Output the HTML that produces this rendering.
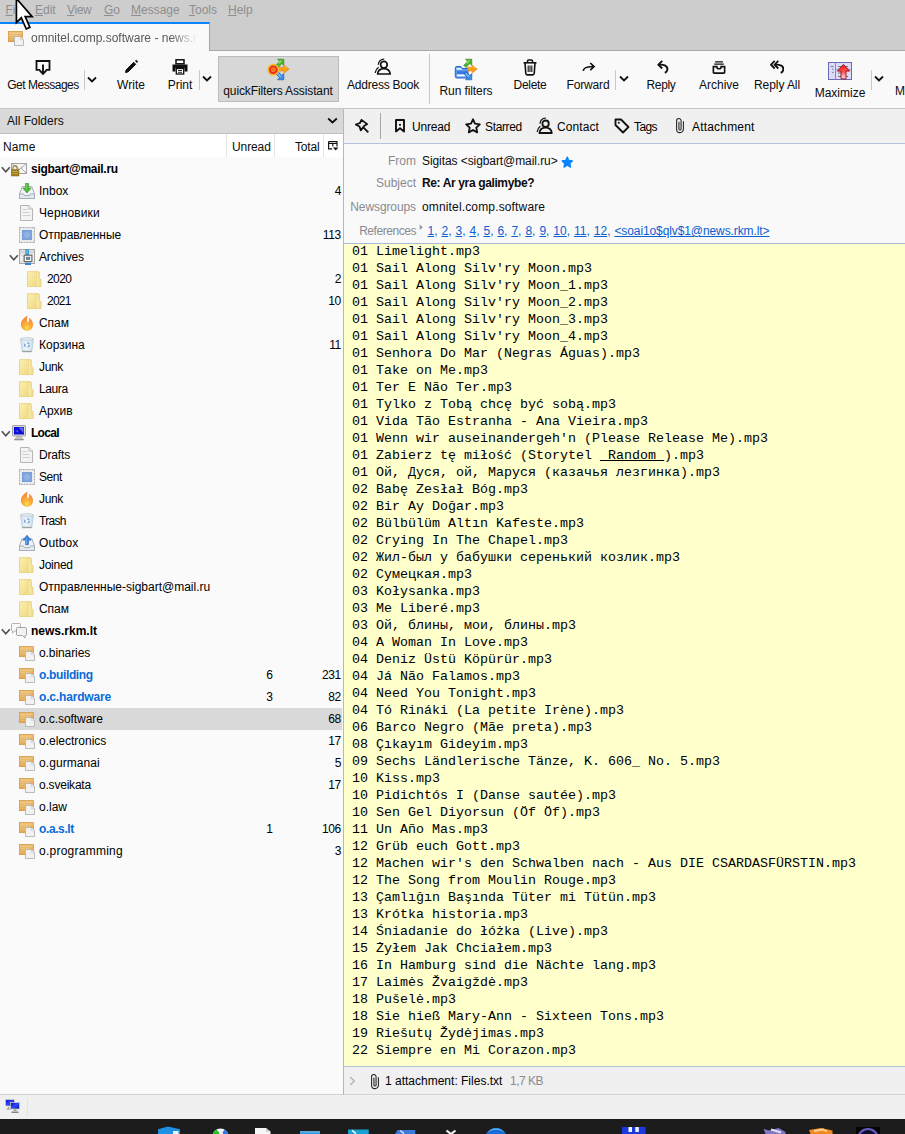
<!DOCTYPE html>
<html><head><meta charset="utf-8"><title>omnitel.comp.software - news.rkm.lt</title>
<style>
*{box-sizing:border-box}
html,body{margin:0;padding:0}
body{width:905px;height:1134px;position:relative;overflow:hidden;background:#f9f9fa;font-family:"Liberation Sans",sans-serif;font-size:12px;color:#0c0c0d}
.abs{position:absolute}
#menubar{left:0;top:0;width:905px;height:22px;background:#cdcdcd;color:#8e8e8e}
#menubar span{position:absolute;top:3px;font-size:12px}
#menubar u{text-decoration-thickness:1px;text-underline-offset:1px}
#tabbar{left:0;top:22px;width:905px;height:29px;background:#cdcdcd;border-bottom:1px solid #a9a9a9}
#tab{left:0;top:22px;width:210px;height:29px;background:#f9f9fa;border-top:2px solid #0a84ff;border-right:1px solid #a6a6a6}
#tabtitle{left:31px;top:30.500px;line-height:14px;width:166px;white-space:nowrap;overflow:hidden;color:#58585c;-webkit-mask-image:linear-gradient(90deg,#000 140px,transparent 166px);mask-image:linear-gradient(90deg,#000 140px,transparent 166px)}
#toolbar{left:0;top:51px;width:905px;height:58px;background:#f9f9fa;border-bottom:1px solid #c6c6c6}
.tb{position:absolute;white-space:nowrap;text-align:center;transform:translateX(-50%);line-height:14px}
.tbi{position:absolute;transform:translateX(-50%)}
.sep{position:absolute;width:1px;background:#c8c8c8}
.chev{position:absolute}
#qfbtn{left:218px;top:56px;width:121px;height:46px;background:#d7d7d8;border:1px solid #bcbcbc}
#fhead{left:0;top:109px;width:343px;height:25px;background:#d9d9d9;border-bottom:1px solid #c0c0c0}
#fcols{left:0;top:134px;width:343px;height:23px;background:#fff}
#ftree{left:0;top:157px;width:343px;height:938px;background:#fafafa;border-bottom:1px solid #d2d2d2}
#split{left:343px;top:109px;width:1px;height:986px;background:#a9b9d0}
.row{position:absolute;left:0;width:342px;height:22px;line-height:22px;color:#000}
.row.sel{background:#d9d9d9}
.row span{position:absolute;top:0}
.row .ic{top:3px;height:16px;line-height:0}
.row .tw{top:8px;line-height:0}
.nm{white-space:nowrap}
.nm.b{font-weight:bold}
.nm.u{font-weight:bold;color:#0a6bd8}
.un{right:69.500px;text-align:right;letter-spacing:-.3px}
.tot{right:1px;text-align:right;letter-spacing:-.3px}
#qf{left:344px;top:109px;width:561px;height:35px;background:linear-gradient(#f0f0f0 80%,#f4f4f4);border-bottom:1px solid #b3c3da}
#qf span{position:absolute;top:11px;line-height:14px;color:#000}
#qf svg{position:absolute}
#hdr{left:344px;top:144px;width:561px;height:99px;background:#f9f9fa}
.hl{position:absolute;left:0;width:72px;text-align:right;color:#8a8a8e;line-height:14px;white-space:nowrap}
.hv{position:absolute;left:78px;line-height:14px;white-space:nowrap}
#msg{left:344px;top:243px;width:561px;height:823px;background:#ffffcc;border-top:1px solid #a9bbd4}
#msg pre{margin:0;position:absolute;left:8px;top:-1px;font-family:"Liberation Mono",monospace;font-size:13.333px;line-height:17px;color:#000}
#att{left:344px;top:1066px;width:561px;height:29px;background:#f0f0f0;border-top:1px solid #b3c6dc;border-bottom:1px solid #d2d2d2}
#status{left:0;top:1095px;width:905px;height:24px;background:#f0f0f0}
#taskbar{left:0;top:1119px;width:905px;height:15px;background:#1c1c1c}
a{color:#0a60d0;text-decoration:underline}
</style></head><body>

<div id="menubar" class="abs">
<span style="left:5.500px"><u>F</u>ile</span><span style="left:35px"><u>E</u>dit</span><span style="left:67px;letter-spacing:-.4px"><u>V</u>iew</span><span style="left:104px"><u>G</u>o</span><span style="left:131px"><u>M</u>essage</span><span style="left:189px"><u>T</u>ools</span><span style="left:228px"><u>H</u>elp</span>
</div>
<div id="tabbar" class="abs"></div>
<div id="tab" class="abs"></div>
<div class="abs" style="left:8px;top:30px;line-height:0"><svg width="16" height="16" viewBox="0 0 16 16"><defs><linearGradient id="gg0" x1="0" y1="0" x2="0" y2="1"><stop offset="0" stop-color="#efc47e"/><stop offset="1" stop-color="#e0a248"/></linearGradient></defs><rect x=".4" y="1.400" width="14" height="10.200" fill="url(#gg0)" stroke="#d89a44" stroke-width=".8"/><path d="M1.500 3.500h12M1.500 5.500h12M1.500 7.500h5M1.500 9.500h5" stroke="#f8e4b8" stroke-width=".7" stroke-dasharray="1 1" opacity=".75"/><path d="M6.500 6.500h6l3 3v6h-9z" fill="#f2f2f2" stroke="#b4b4b4" stroke-width=".9"/><path d="M12.300 6.300l3.300 3.300h-3.300z" fill="#e8e8e8" stroke="#c0c0c0" stroke-width=".5"/><circle cx="13" cy="5.800" r="1.500" fill="#f4a660"/></svg></div>
<div id="tabtitle" class="abs">omnitel.comp.software - news.rkm.lt</div>

<div id="toolbar" class="abs"></div>
<div id="qfbtn" class="abs"></div>

<!-- toolbar labels -->
<div class="tb" style="left:43px;top:78px;letter-spacing:-0.48px">Get Messages</div>
<div class="tb" style="left:131px;top:78px">Write</div>
<div class="tb" style="left:180px;top:78px">Print</div>
<div class="tb" style="left:278px;top:84px;letter-spacing:-0.12px">quickFilters Assistant</div>
<div class="tb" style="left:383px;top:78px;letter-spacing:-0.23px">Address Book</div>
<div class="tb" style="left:466px;top:84px;letter-spacing:-0.09px">Run filters</div>
<div class="tb" style="left:530px;top:78px;letter-spacing:-0.28px">Delete</div>
<div class="tb" style="left:588px;top:78px;letter-spacing:-0.15px">Forward</div>
<div class="tb" style="left:661px;top:78px;letter-spacing:-0.34px">Reply</div>
<div class="tb" style="left:719px;top:78px">Archive</div>
<div class="tb" style="left:777px;top:78px;letter-spacing:-0.08px">Reply All</div>
<div class="tb" style="left:840px;top:86px">Maximize</div>
<div class="abs" style="left:895px;top:84px;line-height:14px">M</div>

<!-- toolbar separators + chevrons -->
<div class="sep" style="left:84px;top:70px;height:20px"></div>
<div class="sep" style="left:199px;top:70px;height:20px"></div>
<div class="sep" style="left:429px;top:54px;height:50px"></div>
<div class="sep" style="left:615px;top:70px;height:20px"></div>
<div class="sep" style="left:871px;top:70px;height:20px"></div>
<svg class="chev" style="left:87px;top:75.500px" width="10" height="8" viewBox="0 0 10 8"><path d="M1 1.500l4 4 4-4" fill="none" stroke="#111" stroke-width="1.800"/></svg>
<svg class="chev" style="left:202px;top:75px" width="10" height="8" viewBox="0 0 10 8"><path d="M1 1.500l4 4 4-4" fill="none" stroke="#111" stroke-width="1.800"/></svg>
<svg class="chev" style="left:619px;top:75px" width="10" height="8" viewBox="0 0 10 8"><path d="M1 1.500l4 4 4-4" fill="none" stroke="#111" stroke-width="1.800"/></svg>
<svg class="chev" style="left:874px;top:75px" width="10" height="8" viewBox="0 0 10 8"><path d="M1 1.500l4 4 4-4" fill="none" stroke="#111" stroke-width="1.800"/></svg>

<!-- toolbar icons -->
<!-- get messages -->
<svg class="tbi" style="left:43px;top:60px" width="16" height="16" viewBox="0 0 16 16"><path d="M5.200 9.800h-3.700v-8.800h13v8.800h-3.700" fill="none" stroke="#111" stroke-width="1.800"/><path d="M8 4.500v9M4.600 10.300l3.400 3.500 3.400-3.500" fill="none" stroke="#111" stroke-width="1.900"/></svg>
<!-- write -->
<svg class="tbi" style="left:131px;top:59px" width="16" height="16" viewBox="0 0 16 16"><path d="M2.500 13.500l.6-2.600 7.600-7.600 2 2-7.600 7.600z" fill="#111" stroke="#111" stroke-width="1"/><path d="M12 2l1.200-1.200 2 2-1.200 1.200z" fill="#111"/></svg>
<!-- print -->
<svg class="tbi" style="left:180px;top:59px" width="16" height="16" viewBox="0 0 16 16"><rect x="4" y=".8" width="8" height="4" fill="#fff" stroke="#111" stroke-width="1.500"/><path d="M.5 5.500h15v7h-3v-3.500h-9v3.500h-3z" fill="#111"/><rect x="4.300" y="9.500" width="7.400" height="5.500" fill="#fff" stroke="#111" stroke-width="1.300"/><path d="M6 11.500h4M6 13.300h4" stroke="#111" stroke-width=".9"/></svg>
<!-- quickfilters -->
<svg class="abs" style="left:266px;top:58px" width="24" height="24" viewBox="0 0 24 24"><path d="M11.500 1.200h6.300v6.300l-2-2-3.800 4-2.200-2.200 3.800-4z" fill="#4caf2e" stroke="#2c8418" stroke-width=".6"/><path d="M12 3.200l3.300-1.200 1 .9-3.600 3.800z" fill="#9be06a" opacity=".7"/><path d="M13.500 9.200h4.700v-2l5 3.900-5 3.900v-2h-4.700z" fill="#f8a018" stroke="#e07a08" stroke-width=".5"/><path d="M14 10h5v-1.500l2 1.500z" fill="#ffd84a" opacity=".8"/><path d="M11.500 21.800h6.300v-6.300l-2 2-3.800-4-2.200 2.200 3.800 4z" fill="#3a8ee6" stroke="#1c4eb0" stroke-width=".6"/><path d="M12.200 15l3.300 3.400-1.300 1-3-3.200z" fill="#7ccaf8" opacity=".8"/><circle cx="7.300" cy="11.700" r="5.700" fill="#f4a81c"/><circle cx="7.300" cy="11.700" r="5.300" fill="none" stroke="#f6c828" stroke-width="1.600" stroke-dasharray="1.400 1.370"/><circle cx="7.300" cy="11.700" r="4.300" fill="#ee2a1a"/><circle cx="7.300" cy="11.700" r="2" fill="#f04a1c" stroke="#f8a828" stroke-width=".9"/><ellipse cx="7.300" cy="11.700" rx=".6" ry="1" fill="#f8a828"/></svg>
<!-- address book -->
<svg class="abs" style="left:374px;top:58px" width="18" height="17" viewBox="0 -1 18 17"><circle cx="9.900" cy="5.700" r="3.300" fill="none" stroke="#111" stroke-width="1.700"/><path d="M3.600 15c.4-3.400 2.900-5.300 6.300-5.300s5.900 1.900 6.300 5.300z" fill="none" stroke="#111" stroke-width="1.700" stroke-linejoin="round"/><path d="M10.200 .1a5.600 5.600 0 0 0-5.900 5.700M4.600 8.300a8 8 0 0 0-3.400 5.500" fill="none" stroke="#111" stroke-width="1.300"/></svg>
<!-- run filters -->
<svg class="abs" style="left:454px;top:58px" width="24" height="24" viewBox="0 0 24 24"><path d="M1.300 10a1.500 1.500 0 0 1 1.500-1.500h4l1.700 2h5.500v9.500h-11.200a1.500 1.500 0 0 1-1.500-1.500z" fill="#5a9cf0" stroke="#2a62d0" stroke-width="1"/><path d="M2.500 10h4.200l1.500 1.800h-5.700z" fill="#e4f0ff"/><path d="M3 13.200h10v3h-10z" fill="#3a78e0"/><path d="M3 16.400h8.500v2h-8.500z" fill="#f4f8ff"/><path d="M11.500 1.200h6.300v6.300l-2-2-3.800 4-2.200-2.200 3.800-4z" fill="#4caf2e" stroke="#2c8418" stroke-width=".6"/><path d="M12 3.200l3.300-1.200 1 .9-3.600 3.800z" fill="#9be06a" opacity=".7"/><path d="M13.500 9.200h4.700v-2l5 3.900-5 3.900v-2h-4.700z" fill="#f8a018" stroke="#e07a08" stroke-width=".5"/><path d="M14 10h5v-1.500l2 1.500z" fill="#ffd84a" opacity=".8"/><path d="M11.500 21.800h6.300v-6.300l-2 2-3.800-4-2.200 2.200 3.800 4z" fill="#3a8ee6" stroke="#1c4eb0" stroke-width=".6"/><path d="M12.200 15l3.300 3.400-1.300 1-3-3.200z" fill="#7ccaf8" opacity=".8"/></svg>
<!-- delete -->
<svg class="tbi" style="left:530px;top:59px" width="16" height="17" viewBox="0 0 16 17"><path d="M1.500 3.800h13" stroke="#111" stroke-width="1.600"/><path d="M5.500 3.500v-1.500a1 1 0 0 1 1-1h3a1 1 0 0 1 1 1v1.500" fill="none" stroke="#111" stroke-width="1.500"/><path d="M3 4l.8 10.500a1.500 1.500 0 0 0 1.500 1.400h5.400a1.500 1.500 0 0 0 1.500-1.400l.8-10.500" fill="none" stroke="#111" stroke-width="1.600"/><path d="M6.200 6.500v6.500M8 6.500v6.500M9.800 6.500v6.500" stroke="#111" stroke-width="1.100"/></svg>
<!-- forward -->
<svg class="tbi" style="left:589px;top:62px" width="14" height="10" viewBox="0 0 14 10"><path d="M1.200 8.800c.5-3 3.500-4.300 10-4" fill="none" stroke="#111" stroke-width="1.700"/><path d="M8.300 1l3.700 3.600-3.700 3.500" fill="none" stroke="#111" stroke-width="1.700"/></svg>
<!-- reply -->
<svg class="abs" style="left:657px;top:59.500px" width="12" height="14" viewBox="0 0 12 14"><path d="M5.200 .9l-3.800 3.800 3.800 3.800" fill="none" stroke="#111" stroke-width="1.900"/><path d="M1.800 4.700c5.400-.4 9 1.400 8.600 4.900-.2 1.400-1 2.400-2.500 3.300" fill="none" stroke="#111" stroke-width="1.900"/></svg>
<!-- archive -->
<svg class="tbi" style="left:719px;top:61px" width="14" height="13" viewBox="0 0 16 15"><path d="M3.500 1h9M2.500 3.600h11" stroke="#111" stroke-width="1.500"/><path d="M1.500 6.500h4c0 1.500 1 2.500 2.500 2.500s2.500-1 2.500-2.500h4v6.500a1 1 0 0 1-1 1h-11a1 1 0 0 1-1-1z" fill="none" stroke="#111" stroke-width="1.900"/></svg>
<!-- reply all -->
<svg class="abs" style="left:769.500px;top:59.500px" width="14.500" height="14" viewBox="0 0 14.500 14"><path d="M4.700 .9l-3.700 3.800 3.700 3.800M8.300 .9l-3.700 3.800 3.700 3.800" fill="none" stroke="#111" stroke-width="1.800"/><path d="M5 4.700c5.200-.4 8.700 1.400 8.300 4.900-.2 1.400-1 2.400-2.500 3.300" fill="none" stroke="#111" stroke-width="1.900"/></svg>
<!-- maximize -->
<svg class="abs" style="left:828px;top:62px" width="24" height="18" viewBox="0 0 24 18"><defs><linearGradient id="mx" x1="0" y1="0" x2="0" y2="1"><stop offset="0" stop-color="#f81818"/><stop offset=".55" stop-color="#fb5a5a"/><stop offset="1" stop-color="#fff0f0"/></linearGradient></defs><rect x=".5" y=".5" width="23" height="17" fill="#dcdcfa" stroke="#6a6ab6"/><path d="M7.500 .5v17" stroke="#8484c8" stroke-width="1"/><path d="M8 7.200h15.500" stroke="#7a8ee0" stroke-width=".7"/><path d="M2.800 4.500h2.700M4 7.200h1.500M4 10.400h1.500M10 4.500h10M10 11h3M10 14.500h10" stroke="#5a5a6a" stroke-width=".8"/><path d="M15.400 2.500l6.300 6.600h-3.700v7.700h-5v-7.700h-3.600z" fill="url(#mx)" stroke="#a40606" stroke-width=".9" stroke-linejoin="round"/></svg>

<!-- folder pane -->
<div id="fhead" class="abs"><span class="abs" style="left:7px;top:5px;line-height:14px">All Folders</span><svg class="abs" style="left:327px;top:8px" width="11" height="8" viewBox="0 0 11 8"><path d="M1.200 1.500l4.300 4 4.300-4" fill="none" stroke="#111" stroke-width="1.800"/></svg></div>
<div id="fcols" class="abs">
<span class="abs" style="left:3px;top:6px;line-height:14px;letter-spacing:.1px">Name</span>
<span class="abs" style="left:232px;top:6px;line-height:14px;letter-spacing:-.1px">Unread</span>
<span class="abs" style="left:295px;top:6px;line-height:14px;letter-spacing:-.2px">Total</span>
<div class="sep" style="left:226px;top:0;height:23px;background:#e4e4e4"></div>
<div class="sep" style="left:274px;top:0;height:23px;background:#e4e4e4"></div>
<div class="sep" style="left:323px;top:0;height:23px;background:#e4e4e4"></div>
<svg class="abs" style="left:328px;top:7px" width="11" height="10" viewBox="0 0 11 10"><path d="M.6 .6h8.400v5M.6 .6v7.300h3.600M.6 2.500h8.400M4.800 2.500v3" fill="none" stroke="#111" stroke-width="1.150"/><path d="M5 6.400h5.400l-2.700 3.200z" fill="#111"/></svg>
</div>
<div id="ftree" class="abs"></div>
<div class="row" style="top:158px">
<span class="tw" style="left:1px"><svg width="10" height="8" viewBox="0 0 10 8"><path d="M.8 1.200l4 4.500 4-4.500" fill="none" stroke="#505050" stroke-width="1.600"/></svg></span>
<span class="ic" style="left:11px"><svg width="16" height="16" viewBox="0 0 16 16"><path d="M.5 2.500h15v10h-15z" fill="#f4f4f4" stroke="#a2a2a2"/><path d="M.5 2.500l7.500 6 7.500-6M15.500 12.500l-5.500-5.500" fill="none" stroke="#a8a8a8"/><path d="M2 8.500v-1.700a2.100 2.100 0 0 1 4.200 0v1.700" fill="none" stroke="#a08a3a" stroke-width="1.300"/><rect x=".3" y="8.500" width="7.700" height="6.500" fill="#9c7e1c" stroke="#8a6c14" stroke-width=".5"/><path d="M1 10.500h6.300M1 12.700h6.300" stroke="#c8aa50" stroke-width=".9"/></svg></span>
<span class="nm b" style="left:31px;letter-spacing:-0.28px">sigbart@mail.ru</span>
</div>
<div class="row" style="top:180px">
<span class="ic" style="left:19px"><svg width="16" height="16" viewBox="0 0 16 16"><path d="M3.200 3.500h9.600l2.700 7.500v4.500h-15v-4.500z" fill="#f0f2f6" stroke="#a9adb6"/><path d="M.5 11h4l1 1.600h5l1-1.600h4v4.500h-15z" fill="#e3e9f1" stroke="#a9adb6"/><path d="M6.500 .2h3v4.800h2.700l-4.200 5-4.200-5h2.700z" fill="#4cbc38" stroke="#2f9422" stroke-width=".6"/><path d="M7.300 1v5" stroke="#8ade74" stroke-width=".9"/></svg></span>
<span class="nm" style="left:39px">Inbox</span>
<span class="tot">4</span>
</div>
<div class="row" style="top:202px">
<span class="ic" style="left:19px"><svg width="16" height="16" viewBox="0 0 16 16"><path d="M1.500 .5h8.500l3.500 3.500v11.500h-12z" fill="#f3f3f3" stroke="#b5b5b5"/><path d="M10 .5v3.500h3.500" fill="#fafafa" stroke="#b5b5b5"/><path d="M3.500 4.500h5M3.500 7.500h7M3.500 10.500h8" stroke="#d0d0d0"/></svg></span>
<span class="nm" style="left:39px;letter-spacing:0.12px">Черновики</span>
</div>
<div class="row" style="top:224px">
<span class="ic" style="left:19px"><svg width="16" height="16" viewBox="0 0 16 16"><rect x=".6" y=".6" width="14.800" height="14.800" fill="#f6f6f6" stroke="#b0b0b0" stroke-width="1.200" stroke-dasharray="2.200 .75"/><rect x="3.300" y="3.300" width="9.400" height="9.400" fill="#7ea6dc" stroke="#6a94d2" stroke-width=".8"/><circle cx="8" cy="8" r="2.300" fill="#8db1e2" stroke="#a4c2ea" stroke-width=".7"/></svg></span>
<span class="nm" style="left:39px;letter-spacing:-0.08px">Отправленные</span>
<span class="tot">113</span>
</div>
<div class="row" style="top:246px">
<span class="tw" style="left:9px"><svg width="10" height="8" viewBox="0 0 10 8"><path d="M.8 1.200l4 4.500 4-4.500" fill="none" stroke="#505050" stroke-width="1.600"/></svg></span>
<span class="ic" style="left:19px"><svg width="16" height="16" viewBox="0 0 16 16"><rect x=".5" y=".5" width="15" height="14" fill="#f0f0f0" stroke="#a6a6a6"/><path d="M1 2.200h14M1 3.800h14" stroke="#c4c4c4" stroke-width=".8"/><path d="M.8 4.500l5 5-5 5" fill="none" stroke="#c0c0c0" stroke-width=".8"/><rect x="6.300" y="0" width="3.700" height="7" fill="#3a9acc"/><path d="M8.100 .8v4" stroke="#8ad0ee" stroke-width="1"/><rect x="5.200" y="6.200" width="7.700" height="6.400" fill="#f6f6f6" stroke="#6c6c6c" stroke-width="1.200"/><rect x="7.300" y="8.200" width="3.500" height="2.300" fill="#3a9acc" stroke="#666" stroke-width=".6"/><rect x="6" y="13.600" width="6" height="2.400" fill="#3a84d0"/></svg></span>
<span class="nm" style="left:39px;letter-spacing:-0.14px">Archives</span>
</div>
<div class="row" style="top:268px">
<span class="ic" style="left:27px"><svg width="16" height="16" viewBox="0 0 16 16"><defs><linearGradient id="fg" x1="0" y1="0" x2="1" y2="1"><stop offset="0" stop-color="#fbf0b4"/><stop offset="1" stop-color="#f0d87e"/></linearGradient></defs><path d="M9.500 .7h2.300l.5.500v5.800l1.700 1.800v6.700h-4.500z" fill="#f3e19a" stroke="#e6cf7c" stroke-width=".9"/><path d="M.5 .7h9v14.800h-9z" fill="url(#fg)" stroke="#e8d27e" stroke-width=".9"/><path d="M10.200 1.500v13.500" stroke="#faf3cc" stroke-width=".8"/></svg></span>
<span class="nm" style="left:47px;letter-spacing:-0.6px">2020</span>
<span class="tot">2</span>
</div>
<div class="row" style="top:290px">
<span class="ic" style="left:27px"><svg width="16" height="16" viewBox="0 0 16 16"><defs><linearGradient id="fg" x1="0" y1="0" x2="1" y2="1"><stop offset="0" stop-color="#fbf0b4"/><stop offset="1" stop-color="#f0d87e"/></linearGradient></defs><path d="M9.500 .7h2.300l.5.500v5.800l1.700 1.800v6.700h-4.500z" fill="#f3e19a" stroke="#e6cf7c" stroke-width=".9"/><path d="M.5 .7h9v14.800h-9z" fill="url(#fg)" stroke="#e8d27e" stroke-width=".9"/><path d="M10.200 1.500v13.500" stroke="#faf3cc" stroke-width=".8"/></svg></span>
<span class="nm" style="left:47px;letter-spacing:-0.75px">2021</span>
<span class="tot">10</span>
</div>
<div class="row" style="top:312px">
<span class="ic" style="left:19px"><svg width="16" height="16" viewBox="0 0 16 16"><defs><radialGradient id="sg" cx=".5" cy=".82" r=".75"><stop offset="0" stop-color="#ffe436"/><stop offset=".3" stop-color="#fbb63c"/><stop offset=".65" stop-color="#f79a40"/><stop offset="1" stop-color="#f2872e"/></radialGradient></defs><path d="M8.700 .2c-1.200 1.300-5.700 3.300-6.700 7.800-.8 4 2 7.700 6 7.700s6.300-3.200 6-6.700c-.2-3-2-5-3.800-6.200.4 2-.4 4-1.600 4.800-.8-1.600-.6-4.600.100-7.400z" fill="url(#sg)"/></svg></span>
<span class="nm" style="left:39px;letter-spacing:-0.07px">Спам</span>
</div>
<div class="row" style="top:334px">
<span class="ic" style="left:19px"><svg width="16" height="16" viewBox="0 0 16 16"><defs><linearGradient id="tg" x1="0" x2="1"><stop offset="0" stop-color="#cfe2f0"/><stop offset=".5" stop-color="#eef5fa"/><stop offset="1" stop-color="#c6dbea"/></linearGradient></defs><path d="M1.500 2l1.700 12.500h9.600l1.700-12.500z" fill="url(#tg)" stroke="#b8cbd9" stroke-width=".8"/><ellipse cx="8" cy="2" rx="6.500" ry="1.300" fill="#e6eef5" stroke="#b3c2ce" stroke-width=".7"/><path d="M3.300 14.500h9.400" stroke="#9a9fa5" stroke-width="1.400"/><circle cx="8" cy="8" r="2.300" fill="none" stroke="#5a94d0" stroke-width="1.100" stroke-dasharray="2.800 2"/></svg></span>
<span class="nm" style="left:39px">Корзина</span>
<span class="tot">11</span>
</div>
<div class="row" style="top:356px">
<span class="ic" style="left:19px"><svg width="16" height="16" viewBox="0 0 16 16"><defs><linearGradient id="fg" x1="0" y1="0" x2="1" y2="1"><stop offset="0" stop-color="#fbf0b4"/><stop offset="1" stop-color="#f0d87e"/></linearGradient></defs><path d="M9.500 .7h2.300l.5.500v5.800l1.700 1.800v6.700h-4.500z" fill="#f3e19a" stroke="#e6cf7c" stroke-width=".9"/><path d="M.5 .7h9v14.800h-9z" fill="url(#fg)" stroke="#e8d27e" stroke-width=".9"/><path d="M10.200 1.500v13.500" stroke="#faf3cc" stroke-width=".8"/></svg></span>
<span class="nm" style="left:39px;letter-spacing:-0.34px">Junk</span>
</div>
<div class="row" style="top:378px">
<span class="ic" style="left:19px"><svg width="16" height="16" viewBox="0 0 16 16"><defs><linearGradient id="fg" x1="0" y1="0" x2="1" y2="1"><stop offset="0" stop-color="#fbf0b4"/><stop offset="1" stop-color="#f0d87e"/></linearGradient></defs><path d="M9.500 .7h2.300l.5.500v5.800l1.700 1.800v6.700h-4.500z" fill="#f3e19a" stroke="#e6cf7c" stroke-width=".9"/><path d="M.5 .7h9v14.800h-9z" fill="url(#fg)" stroke="#e8d27e" stroke-width=".9"/><path d="M10.200 1.500v13.500" stroke="#faf3cc" stroke-width=".8"/></svg></span>
<span class="nm" style="left:39px;letter-spacing:-0.4px">Laura</span>
</div>
<div class="row" style="top:400px">
<span class="ic" style="left:19px"><svg width="16" height="16" viewBox="0 0 16 16"><defs><linearGradient id="fg" x1="0" y1="0" x2="1" y2="1"><stop offset="0" stop-color="#fbf0b4"/><stop offset="1" stop-color="#f0d87e"/></linearGradient></defs><path d="M9.500 .7h2.300l.5.500v5.800l1.700 1.800v6.700h-4.500z" fill="#f3e19a" stroke="#e6cf7c" stroke-width=".9"/><path d="M.5 .7h9v14.800h-9z" fill="url(#fg)" stroke="#e8d27e" stroke-width=".9"/><path d="M10.200 1.500v13.500" stroke="#faf3cc" stroke-width=".8"/></svg></span>
<span class="nm" style="left:39px">Архив</span>
</div>
<div class="row" style="top:422px">
<span class="tw" style="left:1px"><svg width="10" height="8" viewBox="0 0 10 8"><path d="M.8 1.200l4 4.500 4-4.500" fill="none" stroke="#505050" stroke-width="1.600"/></svg></span>
<span class="ic" style="left:11px"><svg width="16" height="16" viewBox="0 0 16 16"><rect x="1.500" y=".5" width="13" height="10.500" rx=".6" fill="#dcdad2" stroke="#a4a4a4"/><rect x="3" y="2" width="10" height="7.500" fill="#0c0cdc"/><path d="M7.500 2.500h5v5.500z" fill="#6a7af0" opacity=".85"/><path d="M4 6.500l2.500-2 1.500 3z" fill="#4a5ae8" opacity=".8"/><path d="M6.200 11.500h3.600l2.700 3h-9z" fill="#c4c4c4" stroke="#9c9c9c" stroke-width=".6"/><path d="M3.500 14.700h9" stroke="#8c8c8c" stroke-width="1.200"/></svg></span>
<span class="nm b" style="left:31px;letter-spacing:-0.71px">Local</span>
</div>
<div class="row" style="top:444px">
<span class="ic" style="left:19px"><svg width="16" height="16" viewBox="0 0 16 16"><path d="M1.500 .5h8.500l3.500 3.500v11.500h-12z" fill="#f3f3f3" stroke="#b5b5b5"/><path d="M10 .5v3.500h3.500" fill="#fafafa" stroke="#b5b5b5"/><path d="M3.500 4.500h5M3.500 7.500h7M3.500 10.500h8" stroke="#d0d0d0"/></svg></span>
<span class="nm" style="left:39px;letter-spacing:-0.17px">Drafts</span>
</div>
<div class="row" style="top:466px">
<span class="ic" style="left:19px"><svg width="16" height="16" viewBox="0 0 16 16"><rect x=".6" y=".6" width="14.800" height="14.800" fill="#f6f6f6" stroke="#b0b0b0" stroke-width="1.200" stroke-dasharray="2.200 .75"/><rect x="3.300" y="3.300" width="9.400" height="9.400" fill="#7ea6dc" stroke="#6a94d2" stroke-width=".8"/><circle cx="8" cy="8" r="2.300" fill="#8db1e2" stroke="#a4c2ea" stroke-width=".7"/></svg></span>
<span class="nm" style="left:39px;letter-spacing:-0.45px">Sent</span>
</div>
<div class="row" style="top:488px">
<span class="ic" style="left:19px"><svg width="16" height="16" viewBox="0 0 16 16"><defs><radialGradient id="sg" cx=".5" cy=".82" r=".75"><stop offset="0" stop-color="#ffe436"/><stop offset=".3" stop-color="#fbb63c"/><stop offset=".65" stop-color="#f79a40"/><stop offset="1" stop-color="#f2872e"/></radialGradient></defs><path d="M8.700 .2c-1.200 1.300-5.700 3.300-6.700 7.800-.8 4 2 7.700 6 7.700s6.300-3.200 6-6.700c-.2-3-2-5-3.800-6.200.4 2-.4 4-1.600 4.800-.8-1.600-.6-4.600.100-7.400z" fill="url(#sg)"/></svg></span>
<span class="nm" style="left:39px;letter-spacing:-0.34px">Junk</span>
</div>
<div class="row" style="top:510px">
<span class="ic" style="left:19px"><svg width="16" height="16" viewBox="0 0 16 16"><defs><linearGradient id="tg" x1="0" x2="1"><stop offset="0" stop-color="#cfe2f0"/><stop offset=".5" stop-color="#eef5fa"/><stop offset="1" stop-color="#c6dbea"/></linearGradient></defs><path d="M1.500 2l1.700 12.500h9.600l1.700-12.500z" fill="url(#tg)" stroke="#b8cbd9" stroke-width=".8"/><ellipse cx="8" cy="2" rx="6.500" ry="1.300" fill="#e6eef5" stroke="#b3c2ce" stroke-width=".7"/><path d="M3.300 14.500h9.400" stroke="#9a9fa5" stroke-width="1.400"/><circle cx="8" cy="8" r="2.300" fill="none" stroke="#5a94d0" stroke-width="1.100" stroke-dasharray="2.800 2"/></svg></span>
<span class="nm" style="left:39px;letter-spacing:-0.71px">Trash</span>
</div>
<div class="row" style="top:532px">
<span class="ic" style="left:19px"><svg width="16" height="16" viewBox="0 0 16 16"><path d="M3.200 3.500h9.600l2.700 7.500v4.500h-15v-4.500z" fill="#f0f2f6" stroke="#a9adb6"/><path d="M.5 11h4l1 1.600h5l1-1.600h4v4.500h-15z" fill="#e3e9f1" stroke="#a9adb6"/><path d="M8 .2l4.200 5h-2.700v4.600h-3v-4.600h-2.700z" fill="#3a84e2" stroke="#2a66c4" stroke-width=".6"/><path d="M7.300 3.500v5.500" stroke="#84b8f4" stroke-width=".9"/></svg></span>
<span class="nm" style="left:39px;letter-spacing:0.13px">Outbox</span>
</div>
<div class="row" style="top:554px">
<span class="ic" style="left:19px"><svg width="16" height="16" viewBox="0 0 16 16"><defs><linearGradient id="fg" x1="0" y1="0" x2="1" y2="1"><stop offset="0" stop-color="#fbf0b4"/><stop offset="1" stop-color="#f0d87e"/></linearGradient></defs><path d="M9.500 .7h2.300l.5.500v5.800l1.700 1.800v6.700h-4.500z" fill="#f3e19a" stroke="#e6cf7c" stroke-width=".9"/><path d="M.5 .7h9v14.800h-9z" fill="url(#fg)" stroke="#e8d27e" stroke-width=".9"/><path d="M10.200 1.500v13.500" stroke="#faf3cc" stroke-width=".8"/></svg></span>
<span class="nm" style="left:39px;letter-spacing:-0.28px">Joined</span>
</div>
<div class="row" style="top:576px">
<span class="ic" style="left:19px"><svg width="16" height="16" viewBox="0 0 16 16"><defs><linearGradient id="fg" x1="0" y1="0" x2="1" y2="1"><stop offset="0" stop-color="#fbf0b4"/><stop offset="1" stop-color="#f0d87e"/></linearGradient></defs><path d="M9.500 .7h2.300l.5.500v5.800l1.700 1.800v6.700h-4.500z" fill="#f3e19a" stroke="#e6cf7c" stroke-width=".9"/><path d="M.5 .7h9v14.800h-9z" fill="url(#fg)" stroke="#e8d27e" stroke-width=".9"/><path d="M10.200 1.500v13.500" stroke="#faf3cc" stroke-width=".8"/></svg></span>
<span class="nm" style="left:39px">Отправленные-sigbart@mail.ru</span>
</div>
<div class="row" style="top:598px">
<span class="ic" style="left:19px"><svg width="16" height="16" viewBox="0 0 16 16"><defs><linearGradient id="fg" x1="0" y1="0" x2="1" y2="1"><stop offset="0" stop-color="#fbf0b4"/><stop offset="1" stop-color="#f0d87e"/></linearGradient></defs><path d="M9.500 .7h2.300l.5.500v5.800l1.700 1.800v6.700h-4.500z" fill="#f3e19a" stroke="#e6cf7c" stroke-width=".9"/><path d="M.5 .7h9v14.800h-9z" fill="url(#fg)" stroke="#e8d27e" stroke-width=".9"/><path d="M10.200 1.500v13.500" stroke="#faf3cc" stroke-width=".8"/></svg></span>
<span class="nm" style="left:39px;letter-spacing:-0.07px">Спам</span>
</div>
<div class="row" style="top:620px">
<span class="tw" style="left:1px"><svg width="10" height="8" viewBox="0 0 10 8"><path d="M.8 1.200l4 4.500 4-4.500" fill="none" stroke="#505050" stroke-width="1.600"/></svg></span>
<span class="ic" style="left:11px"><svg width="16" height="16" viewBox="0 0 16 16"><path d="M1.500 .5h7a1 1 0 0 1 1 1v5.500a1 1 0 0 1-1 1h-5l-2 2.200v-2.200a1 1 0 0 1-1-1v-5.500a1 1 0 0 1 1-1z" fill="#f8f8f8" stroke="#aaa" stroke-width=".9"/><path d="M6.500 4.500h8a1 1 0 0 1 1 1v6a1 1 0 0 1-1 1h-.5v2.500l-2.500-2.500h-5a1 1 0 0 1-1-1v-6a1 1 0 0 1 1-1z" fill="#f2f2f2" stroke="#999" stroke-width=".9"/></svg></span>
<span class="nm b" style="left:31px">news.rkm.lt</span>
</div>
<div class="row" style="top:642px">
<span class="ic" style="left:19px"><svg width="16" height="16" viewBox="0 0 16 16"><defs><linearGradient id="gg" x1="0" y1="0" x2="0" y2="1"><stop offset="0" stop-color="#efc47e"/><stop offset="1" stop-color="#e0a248"/></linearGradient></defs><rect x=".4" y="1.400" width="14" height="10.200" fill="url(#gg)" stroke="#d89a44" stroke-width=".8"/><path d="M1.500 3.500h12M1.500 5.500h12M1.500 7.500h5M1.500 9.500h5" stroke="#f8e4b8" stroke-width=".7" stroke-dasharray="1 1" opacity=".75"/><path d="M6.500 6.500h6l3 3v6h-9z" fill="#f2f2f2" stroke="#b4b4b4" stroke-width=".9"/><path d="M12.300 6.300l3.300 3.300h-3.300z" fill="#e8e8e8" stroke="#c0c0c0" stroke-width=".5"/><circle cx="13" cy="5.800" r="1.500" fill="#f4a660"/></svg></span>
<span class="nm" style="left:39px;letter-spacing:-0.09px">o.binaries</span>
</div>
<div class="row" style="top:664px">
<span class="ic" style="left:19px"><svg width="16" height="16" viewBox="0 0 16 16"><defs><linearGradient id="gg" x1="0" y1="0" x2="0" y2="1"><stop offset="0" stop-color="#efc47e"/><stop offset="1" stop-color="#e0a248"/></linearGradient></defs><rect x=".4" y="1.400" width="14" height="10.200" fill="url(#gg)" stroke="#d89a44" stroke-width=".8"/><path d="M1.500 3.500h12M1.500 5.500h12M1.500 7.500h5M1.500 9.500h5" stroke="#f8e4b8" stroke-width=".7" stroke-dasharray="1 1" opacity=".75"/><path d="M6.500 6.500h6l3 3v6h-9z" fill="#f2f2f2" stroke="#b4b4b4" stroke-width=".9"/><path d="M12.300 6.300l3.300 3.300h-3.300z" fill="#e8e8e8" stroke="#c0c0c0" stroke-width=".5"/><circle cx="13" cy="5.800" r="1.500" fill="#f4a660"/></svg></span>
<span class="nm u" style="left:39px;letter-spacing:-0.35px">o.building</span>
<span class="un">6</span>
<span class="tot">231</span>
</div>
<div class="row" style="top:686px">
<span class="ic" style="left:19px"><svg width="16" height="16" viewBox="0 0 16 16"><defs><linearGradient id="gg" x1="0" y1="0" x2="0" y2="1"><stop offset="0" stop-color="#efc47e"/><stop offset="1" stop-color="#e0a248"/></linearGradient></defs><rect x=".4" y="1.400" width="14" height="10.200" fill="url(#gg)" stroke="#d89a44" stroke-width=".8"/><path d="M1.500 3.500h12M1.500 5.500h12M1.500 7.500h5M1.500 9.500h5" stroke="#f8e4b8" stroke-width=".7" stroke-dasharray="1 1" opacity=".75"/><path d="M6.500 6.500h6l3 3v6h-9z" fill="#f2f2f2" stroke="#b4b4b4" stroke-width=".9"/><path d="M12.300 6.300l3.300 3.300h-3.300z" fill="#e8e8e8" stroke="#c0c0c0" stroke-width=".5"/><circle cx="13" cy="5.800" r="1.500" fill="#f4a660"/></svg></span>
<span class="nm u" style="left:39px;letter-spacing:-0.17px">o.c.hardware</span>
<span class="un">3</span>
<span class="tot">82</span>
</div>
<div class="row sel" style="top:708px">
<span class="ic" style="left:19px"><svg width="16" height="16" viewBox="0 0 16 16"><defs><linearGradient id="gg" x1="0" y1="0" x2="0" y2="1"><stop offset="0" stop-color="#efc47e"/><stop offset="1" stop-color="#e0a248"/></linearGradient></defs><rect x=".4" y="1.400" width="14" height="10.200" fill="url(#gg)" stroke="#d89a44" stroke-width=".8"/><path d="M1.500 3.500h12M1.500 5.500h12M1.500 7.500h5M1.500 9.500h5" stroke="#f8e4b8" stroke-width=".7" stroke-dasharray="1 1" opacity=".75"/><path d="M6.500 6.500h6l3 3v6h-9z" fill="#f2f2f2" stroke="#b4b4b4" stroke-width=".9"/><path d="M12.300 6.300l3.300 3.300h-3.300z" fill="#e8e8e8" stroke="#c0c0c0" stroke-width=".5"/><circle cx="13" cy="5.800" r="1.500" fill="#f4a660"/></svg></span>
<span class="nm" style="left:39px;letter-spacing:-0.07px">o.c.software</span>
<span class="tot">68</span>
</div>
<div class="row" style="top:730px">
<span class="ic" style="left:19px"><svg width="16" height="16" viewBox="0 0 16 16"><defs><linearGradient id="gg" x1="0" y1="0" x2="0" y2="1"><stop offset="0" stop-color="#efc47e"/><stop offset="1" stop-color="#e0a248"/></linearGradient></defs><rect x=".4" y="1.400" width="14" height="10.200" fill="url(#gg)" stroke="#d89a44" stroke-width=".8"/><path d="M1.500 3.500h12M1.500 5.500h12M1.500 7.500h5M1.500 9.500h5" stroke="#f8e4b8" stroke-width=".7" stroke-dasharray="1 1" opacity=".75"/><path d="M6.500 6.500h6l3 3v6h-9z" fill="#f2f2f2" stroke="#b4b4b4" stroke-width=".9"/><path d="M12.300 6.300l3.300 3.300h-3.300z" fill="#e8e8e8" stroke="#c0c0c0" stroke-width=".5"/><circle cx="13" cy="5.800" r="1.500" fill="#f4a660"/></svg></span>
<span class="nm" style="left:39px">o.electronics</span>
<span class="tot">17</span>
</div>
<div class="row" style="top:752px">
<span class="ic" style="left:19px"><svg width="16" height="16" viewBox="0 0 16 16"><defs><linearGradient id="gg" x1="0" y1="0" x2="0" y2="1"><stop offset="0" stop-color="#efc47e"/><stop offset="1" stop-color="#e0a248"/></linearGradient></defs><rect x=".4" y="1.400" width="14" height="10.200" fill="url(#gg)" stroke="#d89a44" stroke-width=".8"/><path d="M1.500 3.500h12M1.500 5.500h12M1.500 7.500h5M1.500 9.500h5" stroke="#f8e4b8" stroke-width=".7" stroke-dasharray="1 1" opacity=".75"/><path d="M6.500 6.500h6l3 3v6h-9z" fill="#f2f2f2" stroke="#b4b4b4" stroke-width=".9"/><path d="M12.300 6.300l3.300 3.300h-3.300z" fill="#e8e8e8" stroke="#c0c0c0" stroke-width=".5"/><circle cx="13" cy="5.800" r="1.500" fill="#f4a660"/></svg></span>
<span class="nm" style="left:39px;letter-spacing:0.08px">o.gurmanai</span>
<span class="tot">5</span>
</div>
<div class="row" style="top:774px">
<span class="ic" style="left:19px"><svg width="16" height="16" viewBox="0 0 16 16"><defs><linearGradient id="gg" x1="0" y1="0" x2="0" y2="1"><stop offset="0" stop-color="#efc47e"/><stop offset="1" stop-color="#e0a248"/></linearGradient></defs><rect x=".4" y="1.400" width="14" height="10.200" fill="url(#gg)" stroke="#d89a44" stroke-width=".8"/><path d="M1.500 3.500h12M1.500 5.500h12M1.500 7.500h5M1.500 9.500h5" stroke="#f8e4b8" stroke-width=".7" stroke-dasharray="1 1" opacity=".75"/><path d="M6.500 6.500h6l3 3v6h-9z" fill="#f2f2f2" stroke="#b4b4b4" stroke-width=".9"/><path d="M12.300 6.300l3.300 3.300h-3.300z" fill="#e8e8e8" stroke="#c0c0c0" stroke-width=".5"/><circle cx="13" cy="5.800" r="1.500" fill="#f4a660"/></svg></span>
<span class="nm" style="left:39px;letter-spacing:-0.21px">o.sveikata</span>
<span class="tot">17</span>
</div>
<div class="row" style="top:796px">
<span class="ic" style="left:19px"><svg width="16" height="16" viewBox="0 0 16 16"><defs><linearGradient id="gg" x1="0" y1="0" x2="0" y2="1"><stop offset="0" stop-color="#efc47e"/><stop offset="1" stop-color="#e0a248"/></linearGradient></defs><rect x=".4" y="1.400" width="14" height="10.200" fill="url(#gg)" stroke="#d89a44" stroke-width=".8"/><path d="M1.500 3.500h12M1.500 5.500h12M1.500 7.500h5M1.500 9.500h5" stroke="#f8e4b8" stroke-width=".7" stroke-dasharray="1 1" opacity=".75"/><path d="M6.500 6.500h6l3 3v6h-9z" fill="#f2f2f2" stroke="#b4b4b4" stroke-width=".9"/><path d="M12.300 6.300l3.300 3.300h-3.300z" fill="#e8e8e8" stroke="#c0c0c0" stroke-width=".5"/><circle cx="13" cy="5.800" r="1.500" fill="#f4a660"/></svg></span>
<span class="nm" style="left:39px">o.law</span>
</div>
<div class="row" style="top:818px">
<span class="ic" style="left:19px"><svg width="16" height="16" viewBox="0 0 16 16"><defs><linearGradient id="gg" x1="0" y1="0" x2="0" y2="1"><stop offset="0" stop-color="#efc47e"/><stop offset="1" stop-color="#e0a248"/></linearGradient></defs><rect x=".4" y="1.400" width="14" height="10.200" fill="url(#gg)" stroke="#d89a44" stroke-width=".8"/><path d="M1.500 3.500h12M1.500 5.500h12M1.500 7.500h5M1.500 9.500h5" stroke="#f8e4b8" stroke-width=".7" stroke-dasharray="1 1" opacity=".75"/><path d="M6.500 6.500h6l3 3v6h-9z" fill="#f2f2f2" stroke="#b4b4b4" stroke-width=".9"/><path d="M12.300 6.300l3.300 3.300h-3.300z" fill="#e8e8e8" stroke="#c0c0c0" stroke-width=".5"/><circle cx="13" cy="5.800" r="1.500" fill="#f4a660"/></svg></span>
<span class="nm u" style="left:39px;letter-spacing:-0.39px">o.a.s.lt</span>
<span class="un">1</span>
<span class="tot">106</span>
</div>
<div class="row" style="top:840px">
<span class="ic" style="left:19px"><svg width="16" height="16" viewBox="0 0 16 16"><defs><linearGradient id="gg" x1="0" y1="0" x2="0" y2="1"><stop offset="0" stop-color="#efc47e"/><stop offset="1" stop-color="#e0a248"/></linearGradient></defs><rect x=".4" y="1.400" width="14" height="10.200" fill="url(#gg)" stroke="#d89a44" stroke-width=".8"/><path d="M1.500 3.500h12M1.500 5.500h12M1.500 7.500h5M1.500 9.500h5" stroke="#f8e4b8" stroke-width=".7" stroke-dasharray="1 1" opacity=".75"/><path d="M6.500 6.500h6l3 3v6h-9z" fill="#f2f2f2" stroke="#b4b4b4" stroke-width=".9"/><path d="M12.300 6.300l3.300 3.300h-3.300z" fill="#e8e8e8" stroke="#c0c0c0" stroke-width=".5"/><circle cx="13" cy="5.800" r="1.500" fill="#f4a660"/></svg></span>
<span class="nm" style="left:39px;letter-spacing:0.25px">o.programming</span>
<span class="tot">3</span>
</div>
<div id="split" class="abs"></div>

<!-- quick filter bar -->
<div id="qf" class="abs">
<svg style="left:11px;top:10px" width="14" height="14" viewBox="0 0 14 14"><path d="M6.500 .9l5.700 4.200-3.100 1.900-3.300 4.400-1.300-3.900-3.700-2 4.200-1.500z" fill="none" stroke="#111" stroke-width="1.800" stroke-linejoin="round"/><path d="M8.300 8.300l5 5" stroke="#111" stroke-width="1.900"/></svg>
<div class="sep" style="left:36px;top:4px;height:26px;background:#a6a6a6"></div>
<svg style="left:51px;top:10px" width="10" height="14" viewBox="0 0 10 14"><path d="M1 1h8v11.500l-4-3.200-4 3.200z" fill="none" stroke="#111" stroke-width="1.900" stroke-linejoin="round"/><circle cx="5" cy="5.800" r="1.100" fill="#111"/></svg>
<span style="left:68px;letter-spacing:-.2px">Unread</span>
<svg style="left:121px;top:9px" width="16" height="16" viewBox="0 0 16 16"><path d="M8 1.300l2 4.400 4.800.6-3.500 3.300.9 4.800-4.200-2.400-4.200 2.400.9-4.800-3.500-3.300 4.800-.6z" fill="none" stroke="#111" stroke-width="1.850" stroke-linejoin="round"/></svg>
<span style="left:141px;letter-spacing:-.35px">Starred</span>
<svg style="left:192px;top:8px" width="17" height="17" viewBox="0 -1 17 17"><circle cx="9.600" cy="5.700" r="3.200" fill="none" stroke="#111" stroke-width="1.800"/><path d="M3.400 15c.4-3.400 2.800-5.300 6.200-5.300s5.800 1.900 6.200 5.300z" fill="none" stroke="#111" stroke-width="1.800" stroke-linejoin="round"/><path d="M9.800 .1a5.500 5.500 0 0 0-5.800 5.600M4.400 8.300a8 8 0 0 0-3.300 5.500" fill="none" stroke="#111" stroke-width="1.300"/></svg>
<span style="left:213px;letter-spacing:.09px">Contact</span>
<svg style="left:270px;top:9px" width="16" height="16" viewBox="0 0 16 16"><path d="M1.500 1.500h5.500l7.500 7.500-5.500 5.500-7.500-7.500z" fill="none" stroke="#111" stroke-width="1.850" stroke-linejoin="round"/><circle cx="4.800" cy="4.800" r="1" fill="#111"/></svg>
<span style="left:290px;letter-spacing:-.6px">Tags</span>
<svg style="left:331px;top:8px" width="10" height="17" viewBox="0 0 9 16"><path d="M7.700 4v7.500a3.200 3.200 0 0 1-6.400 0v-8a2.100 2.100 0 0 1 4.200 0v7.700a1 1 0 0 1-2 0v-6.700" fill="none" stroke="#222" stroke-width="1"/></svg>
<span style="left:348px;letter-spacing:.19px">Attachment</span>
</div>

<!-- header -->
<div id="hdr" class="abs">
<div class="hl" style="top:10px">From</div><div class="hv" style="top:10px;letter-spacing:-.08px">Sigitas &lt;sigbart@mail.ru&gt;</div>
<svg class="abs" style="left:217px;top:11.500px" width="12.500" height="12" viewBox="0 0 14 13.500"><path d="M7 1.200l1.800 3.800 4.100.5-3 2.900.8 4.100-3.700-2.100-3.700 2.100.8-4.100-3-2.900 4.100-.5z" fill="#0a84ff" stroke="#0a84ff" stroke-width="1.400" stroke-linejoin="round"/></svg>
<div class="hl" style="top:32px">Subject</div><div class="hv" style="top:32px;font-weight:bold;letter-spacing:-.37px">Re: Ar yra galimybe?</div>
<div class="hl" style="top:56px;letter-spacing:-.1px">Newsgroups</div><div class="hv" style="top:56px;letter-spacing:.15px">omnitel.comp.software</div>
<div class="hl" style="top:80px;letter-spacing:-.45px">References</div>
<svg class="abs" style="left:74.500px;top:80px" width="4.500" height="6.500" viewBox="0 0 5 8"><path d="M.5 .5l4 3.500-4 3.500z" fill="#9a9a9a"/></svg>
<div class="hv" style="top:80px;left:83.500px;color:#0a60d0;word-spacing:.62px"><a>1</a>, <a>2</a>, <a>3</a>, <a>4</a>, <a>5</a>, <a>6</a>, <a>7</a>, <a>8</a>, <a>9</a>, <a>10</a>, <a>11</a>, <a>12</a>, <a style="letter-spacing:-.1px">&lt;soai1o$qlv$1@news.rkm.lt&gt;</a></div>
</div>

<!-- message body -->
<div id="msg" class="abs"><pre>01 Limelight.mp3
01 Sail Along Silv'ry Moon.mp3
01 Sail Along Silv'ry Moon_1.mp3
01 Sail Along Silv'ry Moon_2.mp3
01 Sail Along Silv'ry Moon_3.mp3
01 Sail Along Silv'ry Moon_4.mp3
01 Senhora Do Mar (Negras Águas).mp3
01 Take on Me.mp3
01 Ter E Não Ter.mp3
01 Tylko z Tobą chcę być sobą.mp3
01 Vida Tão Estranha - Ana Vieira.mp3
01 Wenn wir auseinandergeh'n (Please Release Me).mp3
01 Zabierz tę miłość (Storytel <u>_Random_</u>).mp3
01 Ой, Дуся, ой, Маруся (казачья лезгинка).mp3
02 Babę Zesłał Bóg.mp3
02 Bir Ay Doğar.mp3
02 Bülbülüm Altın Kafeste.mp3
02 Crying In The Chapel.mp3
02 Жил-был у бабушки серенький козлик.mp3
02 Сумецкая.mp3
03 Kołysanka.mp3
03 Me Liberé.mp3
03 Ой, блины, мои, блины.mp3
04 A Woman In Love.mp3
04 Deniz Üstü Köpürür.mp3
04 Já Não Falamos.mp3
04 Need You Tonight.mp3
04 Tó Rináki (La petite Irène).mp3
06 Barco Negro (Mãe preta).mp3
08 Çıkayım Gideyim.mp3
09 Sechs Ländlerische Tänze, K. 606_ No. 5.mp3
10 Kiss.mp3
10 Pidichtós I (Danse sautée).mp3
10 Sen Gel Diyorsun (Öf Öf).mp3
11 Un Año Mas.mp3
12 Grüb euch Gott.mp3
12 Machen wir's den Schwalben nach - Aus DIE CSARDASFÜRSTIN.mp3
12 The Song from Moulin Rouge.mp3
13 Çamlığın Başında Tüter mi Tütün.mp3
13 Krótka historia.mp3
14 Śniadanie do łóżka (Live).mp3
15 Żyłem Jak Chciałem.mp3
16 In Hamburg sind die Nächte lang.mp3
17 Laimės Žvaigždė.mp3
18 Pušelė.mp3
18 Sie hieß Mary-Ann - Sixteen Tons.mp3
19 Riešutų Žydėjimas.mp3
22 Siempre en Mi Corazon.mp3</pre></div>

<!-- attachment bar -->
<div id="att" class="abs">
<svg class="abs" style="left:5px;top:9px" width="7" height="10" viewBox="0 0 7 10"><path d="M1.300 1l4 4-4 4" fill="none" stroke="#b2b2b2" stroke-width="1.300"/></svg>
<svg class="abs" style="left:26px;top:6px" width="10" height="17" viewBox="0 0 9 16"><path d="M7.700 4v7.500a3.200 3.200 0 0 1-6.400 0v-8a2.100 2.100 0 0 1 4.200 0v7.700a1 1 0 0 1-2 0v-6.700" fill="none" stroke="#222" stroke-width="1"/></svg>
<span class="abs" style="left:41px;top:7px;line-height:14px;white-space:nowrap;color:#000">1 attachment: Files.txt</span>
<span class="abs" style="left:166px;top:7px;line-height:14px;color:#8a8a8e;white-space:nowrap;letter-spacing:-.5px">1,7 KB</span>
</div>

<!-- status bar -->
<div id="status" class="abs"><div class="sep" style="left:27px;top:3px;height:19px;background:#e4e4e4"></div>
<svg class="abs" style="left:5px;top:4px" width="16" height="15" viewBox="0 0 16 15"><defs><linearGradient id="sm" x1="0" y1="0" x2="1" y2="1"><stop offset="0" stop-color="#0a0ad8"/><stop offset=".5" stop-color="#2a4af0"/><stop offset="1" stop-color="#0a0ac8"/></linearGradient></defs><rect x=".5" y=".5" width="9" height="6.500" fill="url(#sm)" stroke="#d8d4c0" stroke-width=".7"/><path d="M3.500 8v1.200M1.500 10h4.500" stroke="#8a8a8a" stroke-width="1"/><rect x="5.500" y="3.500" width="9" height="6.500" fill="url(#sm)" stroke="#d8d4c0" stroke-width=".7"/><path d="M10 10.500v1.500" stroke="#9a9a9a" stroke-width="3"/><path d="M6.500 13.200h7" stroke="#6a6a6a" stroke-width="1.200"/></svg>
</div>

<!-- taskbar -->
<div id="taskbar" class="abs">
<svg class="abs" style="left:0;top:0" width="905" height="15" viewBox="0 0 905 15">
<path d="M158 15v-4.800l10-2.800 12 2.800v4.800z" fill="#1e90e4"/><path d="M173 12h5.500v3h-5.500z" fill="#e8f4ff"/>
<circle cx="220.500" cy="17.500" r="8" fill="#f0f6f4"/><path d="M212.500 17.500a8 8 0 0 1 4-7l3 3.500-1 3.500z" fill="#2cc02c"/><path d="M228.500 17.500a8 8 0 0 0-4-7l-2 3 2 4z" fill="#2a7ae0"/>
<path d="M255 15v-6h11l4.500 3.600v2.400z" fill="#f6f6f6"/><path d="M266 9v3.600h4.500z" fill="#c4c4c4"/>
<rect x="300" y="12.400" width="20" height="2.600" fill="#2a9ae4"/><rect x="300" y="12.400" width="20" height=".9" fill="#8fd0f4"/>
<path d="M348 15v-4.500h20.700v4.500z" fill="#18a0d4"/><path d="M352 11.300l4 3.200" stroke="#eafaff" stroke-width="1.600"/>
<path d="M395 15l2.500-4h17.800v4z" fill="#3a78dc"/><path d="M400 11.500l4 3" stroke="#dce8ff" stroke-width="1.500"/>
<path d="M446.500 11.500l4.500 3.500 4.500-3.500" stroke="#f2f2f2" stroke-width="2.200" fill="none"/>
<circle cx="496" cy="20" r="11" fill="#1a6cd4"/><path d="M487 14a11 11 0 0 1 18 0a14 14 0 0 0-18 0z" fill="#52b4f4"/>
<rect x="622" y="8" width="23.500" height="7" fill="#1a3ae0"/><rect x="628.500" y="8" width="3.500" height="5" fill="#f0f0ff"/><rect x="635.300" y="8" width="3.500" height="5" fill="#f0f0ff"/>
<path d="M763.500 10l6 1.500 9-2.500 7 4v2h-20z" fill="#8078c4"/><path d="M771 10.500l10 3" stroke="#e4e0f4" stroke-width="2"/>
<path d="M809 11l12-2 11.500 2.500v3.500h-22z" fill="#f08a22"/><path d="M814 12l9-1.500 4 2" stroke="#f8d090" stroke-width="1.800" fill="none"/>
<rect x="856" y="8" width="24" height="7" fill="#050508"/><circle cx="868" cy="20" r="10" fill="#0e0e30" stroke="#6a5cc0" stroke-width="2"/>
</svg>
</div>

<!-- mouse cursor -->
<svg class="abs" style="left:0;top:0" width="40" height="34" viewBox="0 0 40 34"><path d="M16.400 -1.500v24l4.900-4.700 5 11.200 3.600-1.600-4.700-10.800h7z" fill="#fff" stroke="#000" stroke-width="1.700" stroke-linejoin="miter"/></svg>

</body></html>
